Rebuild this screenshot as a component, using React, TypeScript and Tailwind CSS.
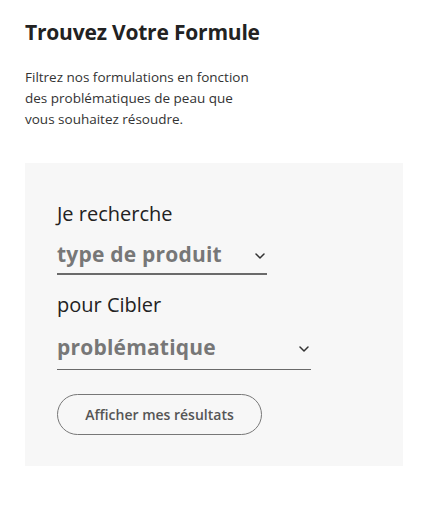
import { useState } from "react";

const Chevron = () => (
    <svg width="10" height="6" viewBox="0 0 10 6" fill="none" className="shrink-0">
        <path d="M1 1l4 4 4-4" stroke="#333" strokeWidth="1.5" strokeLinecap="round" strokeLinejoin="round" />
    </svg>
);

const Select = ({ value, width, thick }: { value: string; width: string; thick?: boolean }) => (
    <button
        type="button"
        className={`flex items-center justify-between ${width} text-left ${thick ? "border-b-2 pb-[5px]" : "border-b pb-[8px]"} border-[#6a6a6a]`}
    >
        <span className="text-[21px] leading-[28px] font-bold text-[#777] tracking-[0.2px]">{value}</span>
        <span className="pr-[2px] pt-[4px]">
            <Chevron />
        </span>
    </button>
);

export default function App() {
    const [product] = useState("type de produit");
    const [concern] = useState("problématique");

    return (
        <div className="w-[428px] min-h-[513px] bg-white px-[25px] pt-[18px]" style={{ fontFamily: "'Open Sans', Lato, sans-serif" }}>
            <h1 className="text-[21px] leading-[28px] font-bold text-[#222] tracking-[-0.2px]">Trouvez Votre Formule</h1>

            <p className="mt-[21px] w-[232px] text-[13.5px] leading-[21px] text-[#333]">
                Filtrez nos formulations en fonction des problématiques de peau que vous souhaitez résoudre.
            </p>

            {/* filtre */}
            <div className="mt-[33px] w-[378px] h-[303px] bg-[#f7f7f7] px-[32px] pt-[37px]">
                <div className="text-[20px] leading-[28px] text-[#222]">Je recherche</div>
                <div className="mt-[12px]">
                    <Select value={product} width="w-[210px]" thick />
                </div>

                <div className="mt-[16px] text-[20px] leading-[28px] text-[#222]">pour Cibler</div>
                <div className="mt-[14px]">
                    <Select value={concern} width="w-[254px]" />
                </div>

                <button
                    type="button"
                    className="mt-[24px] w-[205px] h-[41px] rounded-full border border-[#777] text-[14px] font-semibold text-[#555]"
                >
                    Afficher mes résultats
                </button>
            </div>
        </div>
    );
}
